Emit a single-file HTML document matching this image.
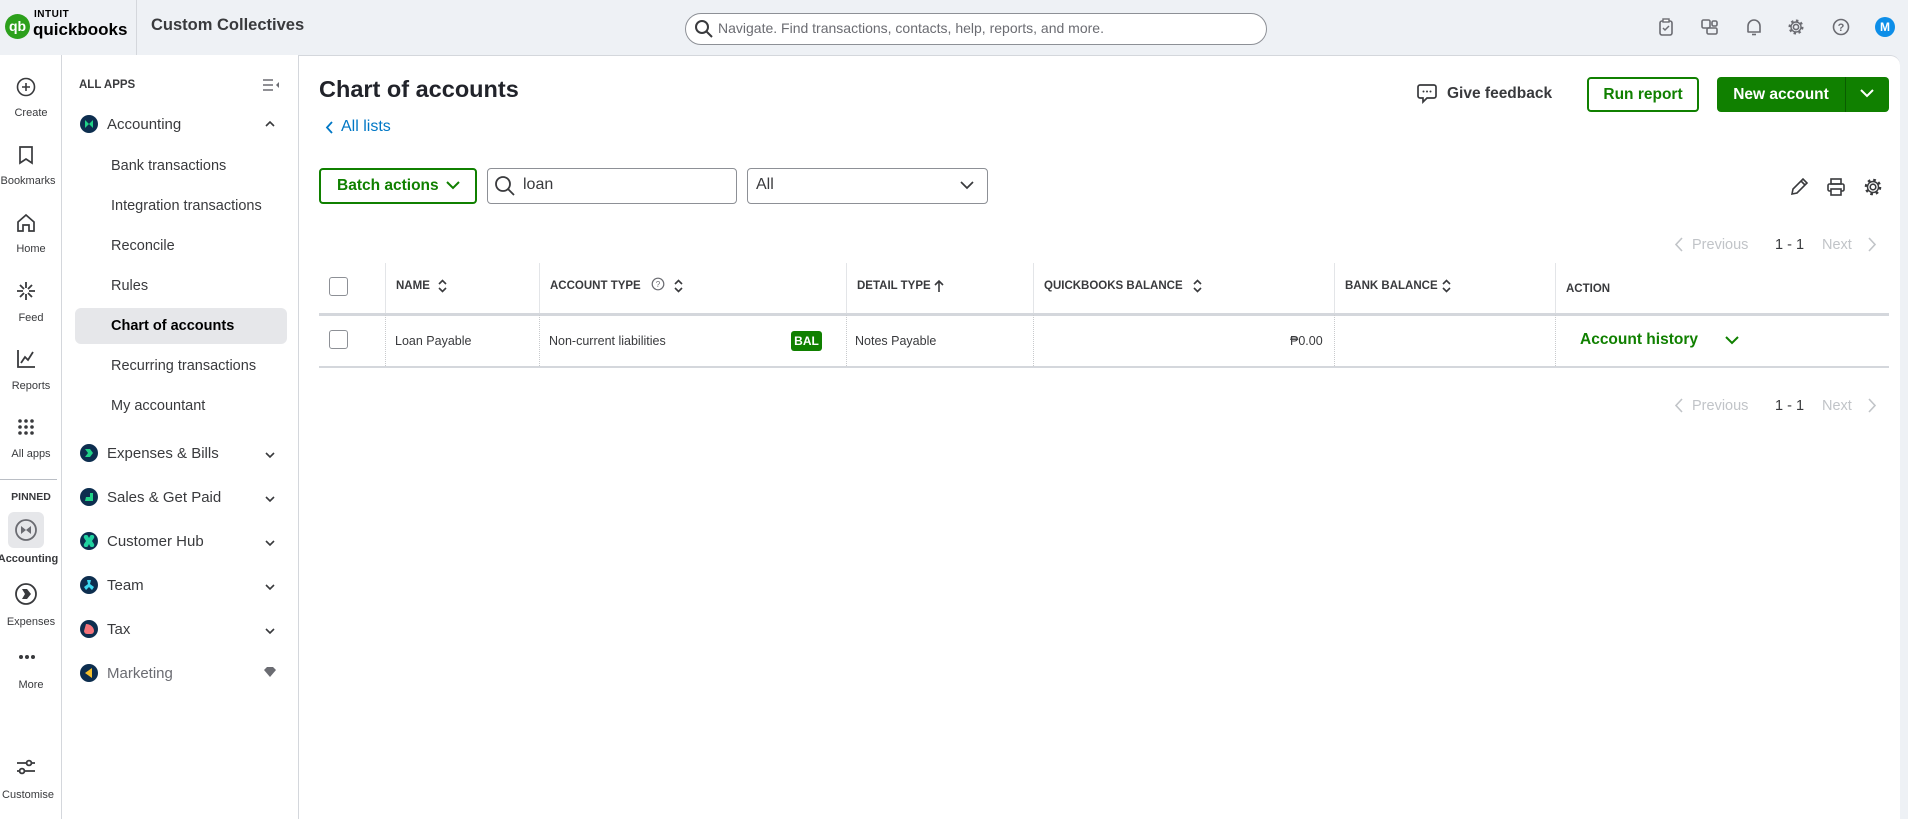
<!DOCTYPE html>
<html><head><meta charset="utf-8"><style>
*{box-sizing:border-box;margin:0;padding:0}
body{width:1908px;height:819px;overflow:hidden;background:#eef1f5;font-family:"Liberation Sans",Arial,sans-serif;color:#393a3d;position:relative}
.a{position:absolute;white-space:nowrap}
.panel{position:absolute;left:0;top:55px;width:1900px;height:764px;background:#fff;border-top-right-radius:10px;border-top:1px solid #d4d7dc}
.rail{position:absolute;left:0;top:55px;width:62px;height:764px;border-right:1.5px solid #d4d7dc;background:#fff}
.side{position:absolute;left:62px;top:55px;width:237px;height:764px;border-right:1.5px solid #d4d7dc;background:#fff}
.rl{font-size:11px;color:#393a3d;text-align:center;width:62px;left:0}
.si{font-size:15px;color:#393a3d}
.sub{left:111px;font-size:14.5px;color:#393a3d}
.ic{width:18px;height:18px;border-radius:50%;background:#0d2e4f;left:80px}
svg{position:absolute}
.th{font-size:11.5px;font-weight:bold;color:#393a3d;top:280px}
.vd{position:absolute;top:263px;width:0;height:51px;border-left:1px solid #e3e5e8}
.vd2{position:absolute;top:315px;height:51px;border-left:1px dotted #c8cacd}
.cb{position:absolute;width:19px;height:19px;border:1.5px solid #8d9096;border-radius:3px;left:329px}
.td{font-size:12.5px;color:#393a3d;top:334px}
.pg{font-size:14.5px;color:#c1c4c8}
</style></head><body>
<!-- header -->
<div class="a" style="left:5px;top:14px;width:25px;height:25px;border-radius:50%;background:#2ca01c;color:#fff;font-weight:bold;font-size:14px;text-align:center;line-height:25px">qb</div>
<div class="a" style="left:34px;top:9px;font-size:10px;font-weight:bold;color:#000;letter-spacing:.5px">INTUIT</div>
<div class="a" style="left:33px;top:20px;font-size:17px;font-weight:bold;color:#000">quickbooks</div>
<div class="a" style="left:136px;top:0;width:1px;height:55px;background:#d4d7dc"></div>
<div class="a" style="left:151px;top:16px;font-size:16.5px;font-weight:bold;color:#393a3d">Custom Collectives</div>
<div class="a" style="left:685px;top:13px;width:582px;height:32px;border:1px solid #8d9096;border-radius:16px;background:#fff"></div>
<svg style="left:694px;top:19px" width="20" height="20" viewBox="0 0 20 20"><circle cx="8" cy="8" r="6" fill="none" stroke="#393a3d" stroke-width="2"/><path d="M12.5 12.5L18 18" stroke="#393a3d" stroke-width="2"/></svg>
<div class="a" style="left:718px;top:20px;font-size:14px;color:#6b6c72">Navigate. Find transactions, contacts, help, reports, and more.</div>
<svg style="left:1657px;top:18px" width="18" height="18" viewBox="0 0 18 18"><rect x="3" y="3" width="12" height="14" rx="2" fill="none" stroke="#6b6c72" stroke-width="1.6"/><rect x="6" y="1" width="6" height="3" fill="#fff" stroke="#6b6c72" stroke-width="1.4"/><path d="M6 10l2 2 4-4" fill="none" stroke="#6b6c72" stroke-width="1.5"/></svg>
<svg style="left:1701px;top:18px" width="18" height="18" viewBox="0 0 18 18"><rect x="1" y="2" width="8" height="8" rx="1.5" fill="none" stroke="#6b6c72" stroke-width="1.6"/><rect x="11" y="3" width="5" height="5" rx="1.5" fill="none" stroke="#6b6c72" stroke-width="1.6"/><rect x="6" y="10" width="10" height="6" rx="1.5" fill="none" stroke="#6b6c72" stroke-width="1.6"/></svg>
<svg style="left:1745px;top:17px" width="18" height="20" viewBox="0 0 18 20"><path d="M3 15V9a6 6 0 0112 0v6H2.5h13" fill="none" stroke="#6b6c72" stroke-width="1.6"/><path d="M7 17.5h4" stroke="#6b6c72" stroke-width="1.6"/></svg>
<svg style="left:1787px;top:18px" width="18" height="18" viewBox="0 0 18 18"><circle cx="9" cy="9" r="2.6" fill="none" stroke="#6b6c72" stroke-width="1.6"/><circle cx="9" cy="9" r="6.3" fill="none" stroke="#6b6c72" stroke-width="2.4" stroke-dasharray="2.4 2.5"/><circle cx="9" cy="9" r="5" fill="none" stroke="#6b6c72" stroke-width="1.4"/></svg>
<svg style="left:1832px;top:18px" width="18" height="18" viewBox="0 0 18 18"><circle cx="9" cy="9" r="7.5" fill="none" stroke="#6b6c72" stroke-width="1.6"/><text x="9" y="13" text-anchor="middle" font-size="11" font-weight="bold" fill="#6b6c72" font-family="Liberation Sans">?</text></svg>
<div class="a" style="left:1875px;top:17px;width:20px;height:20px;border-radius:50%;background:#0d8ee8;color:#fff;font-size:12px;font-weight:bold;text-align:center;line-height:20px">M</div>

<div class="panel"></div>
<!-- rail -->
<div class="rail"></div>
<svg style="left:16px;top:77px" width="20" height="20" viewBox="0 0 20 20"><circle cx="10" cy="10" r="8.5" fill="none" stroke="#393a3d" stroke-width="1.6"/><path d="M10 6v8M6 10h8" stroke="#393a3d" stroke-width="1.6"/></svg>
<div class="a rl" style="top:107px">Create</div>
<svg style="left:18px;top:145px" width="16" height="20" viewBox="0 0 16 20"><path d="M2 2h12v16l-6-4-6 4z" fill="none" stroke="#393a3d" stroke-width="1.7"/></svg>
<div class="a rl" style="top:175px;left:-3px">Bookmarks</div>
<svg style="left:16px;top:213px" width="20" height="20" viewBox="0 0 20 20"><path d="M2 9L10 2l8 7v9h-5v-6H7v6H2z" fill="none" stroke="#393a3d" stroke-width="1.7"/></svg>
<div class="a rl" style="top:243px">Home</div>
<svg style="left:16px;top:281px" width="20" height="20" viewBox="0 0 20 20" stroke="#393a3d" stroke-width="1.8"><path d="M10 1v6M10 13v6M1 10h6M13 10h6M4 4l4 4M12 12l4 4M16 4l-4 4M8 12l-4 4"/></svg>
<div class="a rl" style="top:312px">Feed</div>
<svg style="left:16px;top:349px" width="20" height="20" viewBox="0 0 20 20"><path d="M2 1v17h17" fill="none" stroke="#393a3d" stroke-width="1.8"/><path d="M5 14l4-6 3 3 5-8" fill="none" stroke="#393a3d" stroke-width="1.8"/></svg>
<div class="a rl" style="top:380px">Reports</div>
<svg style="left:17px;top:418px" width="18" height="18" viewBox="0 0 18 18" fill="#393a3d"><circle cx="3" cy="3" r="1.8"/><circle cx="9" cy="3" r="1.8"/><circle cx="15" cy="3" r="1.8"/><circle cx="3" cy="9" r="1.8"/><circle cx="9" cy="9" r="1.8"/><circle cx="15" cy="9" r="1.8"/><circle cx="3" cy="15" r="1.8"/><circle cx="9" cy="15" r="1.8"/><circle cx="15" cy="15" r="1.8"/></svg>
<div class="a rl" style="top:448px">All apps</div>
<div class="a" style="left:0;top:479px;width:57px;height:1px;background:#babec5"></div>
<div class="a rl" style="top:491px;font-weight:bold;font-size:10.5px">PINNED</div>
<div class="a" style="left:8px;top:512px;width:36px;height:36px;border-radius:6px;background:#e6e7ea"></div>
<svg style="left:14px;top:518px" width="24" height="24" viewBox="0 0 24 24"><circle cx="12" cy="12" r="10" fill="none" stroke="#6b6c72" stroke-width="1.8"/><path d="M7 8l5 4-5 4zM17 8l-5 4 5 4z" fill="#6b6c72"/></svg>
<div class="a rl" style="top:553px;font-weight:bold;left:-3px">Accounting</div>
<svg style="left:14px;top:582px" width="24" height="24" viewBox="0 0 24 24"><circle cx="12" cy="12" r="10" fill="none" stroke="#393a3d" stroke-width="1.8"/><path d="M8 7h5l4 5-4 5H8l3-5z" fill="#393a3d"/></svg>
<div class="a rl" style="top:616px">Expenses</div>
<svg style="left:18px;top:654px" width="18" height="6" viewBox="0 0 18 6" fill="#393a3d"><circle cx="3" cy="3" r="2"/><circle cx="9" cy="3" r="2"/><circle cx="15" cy="3" r="2"/></svg>
<div class="a rl" style="top:679px">More</div>
<svg style="left:16px;top:759px" width="20" height="16" viewBox="0 0 20 16" stroke="#393a3d" stroke-width="1.8" fill="#fff"><path d="M1 4h18M1 12h18"/><circle cx="13" cy="4" r="2.4"/><circle cx="6" cy="12" r="2.4"/></svg>
<div class="a rl" style="top:789px;left:-3px">Customise</div>

<!-- sidebar -->
<div class="side"></div>
<div class="a" style="left:79px;top:79px;font-size:11.5px;font-weight:bold;color:#393a3d">ALL APPS</div>
<svg style="left:263px;top:79px" width="16" height="12" viewBox="0 0 16 12" stroke="#6b6c72" stroke-width="1.5"><path d="M0 1h10M0 6h10M0 11h10"/><path d="M16 3v6l-3-3z" fill="#6b6c72" stroke="none"/></svg>
<div class="a ic" style="top:115px"></div><svg style="left:83px;top:118px" width="12" height="12" viewBox="0 0 12 12"><path d="M2 2l4 4-4 4zM10 2L6 6l4 4z" fill="#20d287"/></svg>
<div class="a si" style="left:107px;top:116px">Accounting</div>
<svg style="left:265px;top:120px" width="10" height="7" viewBox="0 0 10 7"><path d="M1 6l4-4 4 4" fill="none" stroke="#393a3d" stroke-width="1.6"/></svg>
<div class="a sub" style="top:158px">Bank transactions</div>
<div class="a sub" style="top:198px">Integration transactions</div>
<div class="a sub" style="top:238px">Reconcile</div>
<div class="a sub" style="top:278px">Rules</div>
<div class="a" style="left:75px;top:308px;width:212px;height:36px;border-radius:6px;background:#e6e7ea"></div>
<div class="a sub" style="top:318px;font-weight:bold;color:#000">Chart of accounts</div>
<div class="a sub" style="top:358px">Recurring transactions</div>
<div class="a sub" style="top:398px">My accountant</div>
<div class="a ic" style="top:444px"></div><svg style="left:83px;top:447px" width="12" height="12" viewBox="0 0 12 12"><path d="M2 2h5l3 4-3 4H2l3-4z" fill="#20d287"/></svg>
<div class="a si" style="left:107px;top:445px">Expenses &amp; Bills</div>
<div class="a ic" style="top:488px"></div><svg style="left:83px;top:491px" width="12" height="12" viewBox="0 0 12 12"><path d="M2 10h8V2H7v4H3z" fill="#20d287"/></svg>
<div class="a si" style="left:107px;top:489px">Sales &amp; Get Paid</div>
<div class="a ic" style="top:532px"></div><svg style="left:83px;top:535px" width="12" height="12" viewBox="0 0 12 12"><path d="M1 3a2 2 0 014-2l1 2 1-2a2 2 0 014 2l-2 3 2 3a2 2 0 01-4 2L6 9l-1 2a2 2 0 01-4-2l2-3z" fill="#20d2a0"/></svg>
<div class="a si" style="left:107px;top:533px">Customer Hub</div>
<div class="a ic" style="top:576px"></div><svg style="left:83px;top:579px" width="12" height="12" viewBox="0 0 12 12"><path d="M4 1h4l-1 4 4 3-2 3-3-3-3 3-2-3 4-3z" fill="#3dd8f0"/></svg>
<div class="a si" style="left:107px;top:577px">Team</div>
<div class="a ic" style="top:620px"></div><svg style="left:83px;top:623px" width="12" height="12" viewBox="0 0 12 12"><path d="M3 1c4 0 8 3 8 7a3 3 0 01-3 3H4a3 3 0 01-3-3z" fill="#f4737a"/></svg>
<div class="a si" style="left:107px;top:621px">Tax</div>
<div class="a ic" style="top:664px"></div><svg style="left:83px;top:667px" width="12" height="12" viewBox="0 0 12 12"><path d="M2 6l7-5v10z" fill="#f5c02c"/></svg>
<div class="a si" style="left:107px;top:665px;color:#6b6c72">Marketing</div>
<svg style="left:265px;top:452px" width="10" height="7" viewBox="0 0 10 7"><path d="M1 1l4 4 4-4" fill="none" stroke="#393a3d" stroke-width="1.6"/></svg>
<svg style="left:265px;top:496px" width="10" height="7" viewBox="0 0 10 7"><path d="M1 1l4 4 4-4" fill="none" stroke="#393a3d" stroke-width="1.6"/></svg>
<svg style="left:265px;top:540px" width="10" height="7" viewBox="0 0 10 7"><path d="M1 1l4 4 4-4" fill="none" stroke="#393a3d" stroke-width="1.6"/></svg>
<svg style="left:265px;top:584px" width="10" height="7" viewBox="0 0 10 7"><path d="M1 1l4 4 4-4" fill="none" stroke="#393a3d" stroke-width="1.6"/></svg>
<svg style="left:265px;top:628px" width="10" height="7" viewBox="0 0 10 7"><path d="M1 1l4 4 4-4" fill="none" stroke="#393a3d" stroke-width="1.6"/></svg>
<svg style="left:264px;top:667px" width="12" height="10" viewBox="0 0 12 10"><path d="M3 0h6l3 3-6 7-6-7z" fill="#6b6c72"/></svg>

<!-- main -->
<div class="a" style="left:319px;top:76px;font-size:23.5px;font-weight:bold;color:#21232a">Chart of accounts</div>
<svg style="left:325px;top:121px" width="8" height="13" viewBox="0 0 8 13"><path d="M7 1L2 6.5 7 12" fill="none" stroke="#0077c5" stroke-width="1.8"/></svg>
<div class="a" style="left:341px;top:118px;font-size:16px;color:#0077c5">All lists</div>

<svg style="left:1417px;top:83px" width="20" height="22" viewBox="0 0 20 22"><path d="M3 2h14a2 2 0 012 2v9a2 2 0 01-2 2h-7l-4 4v-4H3a2 2 0 01-2-2V4a2 2 0 012-2z" fill="none" stroke="#393a3d" stroke-width="1.7"/><circle cx="6.5" cy="8.5" r="1" fill="#393a3d"/><circle cx="10" cy="8.5" r="1" fill="#393a3d"/><circle cx="13.5" cy="8.5" r="1" fill="#393a3d"/></svg>
<div class="a" style="left:1447px;top:85px;font-size:15.5px;font-weight:bold;color:#393a3d">Give feedback</div>
<div class="a" style="left:1587px;top:77px;width:112px;height:35px;border:2px solid #108000;border-radius:4px;color:#108000;font-size:15.5px;font-weight:bold;text-align:center;line-height:31px">Run report</div>
<div class="a" style="left:1717px;top:77px;width:172px;height:35px;background:#108000;border-radius:4px"></div>
<div class="a" style="left:1717px;top:77px;width:128px;height:35px;color:#fff;font-size:15.5px;font-weight:bold;text-align:center;line-height:35px">New account</div>
<div class="a" style="left:1845px;top:77px;width:1px;height:35px;background:#0a5c00"></div>
<svg style="left:1860px;top:89px" width="14" height="9" viewBox="0 0 14 9"><path d="M1 1l6 6 6-6" fill="none" stroke="#fff" stroke-width="2"/></svg>

<div class="a" style="left:319px;top:168px;width:158px;height:36px;border:2px solid #108000;border-radius:4px"></div>
<div class="a" style="left:337px;top:177px;font-size:15.5px;font-weight:bold;color:#108000">Batch actions</div>
<svg style="left:446px;top:181px" width="14" height="9" viewBox="0 0 14 9"><path d="M1 1l6 6 6-6" fill="none" stroke="#108000" stroke-width="2"/></svg>
<div class="a" style="left:487px;top:168px;width:250px;height:36px;border:1px solid #8d9096;border-radius:4px"></div>
<svg style="left:494px;top:175px" width="22" height="22" viewBox="0 0 22 22"><circle cx="9" cy="9" r="7" fill="none" stroke="#393a3d" stroke-width="1.8"/><path d="M14 14l6 6" stroke="#393a3d" stroke-width="1.8"/></svg>
<div class="a" style="left:523px;top:176px;font-size:16px;color:#393a3d">loan</div>
<div class="a" style="left:747px;top:168px;width:241px;height:36px;border:1px solid #8d9096;border-radius:4px"></div>
<div class="a" style="left:756px;top:176px;font-size:16px;color:#393a3d">All</div>
<svg style="left:960px;top:181px" width="14" height="9" viewBox="0 0 14 9"><path d="M1 1l6 6 6-6" fill="none" stroke="#393a3d" stroke-width="1.7"/></svg>

<svg style="left:1789px;top:177px" width="20" height="20" viewBox="0 0 20 20"><path d="M3 17l1-5L14 2l4 4L8 16zM12 4l4 4" fill="none" stroke="#393a3d" stroke-width="1.6"/></svg>
<svg style="left:1826px;top:177px" width="20" height="20" viewBox="0 0 20 20"><rect x="5" y="2" width="10" height="5" fill="none" stroke="#393a3d" stroke-width="1.6"/><rect x="2" y="7" width="16" height="7" rx="1.5" fill="none" stroke="#393a3d" stroke-width="1.6"/><rect x="5" y="12" width="10" height="6" fill="#fff" stroke="#393a3d" stroke-width="1.6"/></svg>
<svg style="left:1863px;top:177px" width="20" height="20" viewBox="0 0 20 20"><circle cx="10" cy="10" r="2.8" fill="none" stroke="#393a3d" stroke-width="1.6"/><circle cx="10" cy="10" r="7" fill="none" stroke="#393a3d" stroke-width="2.6" stroke-dasharray="2.6 2.9"/><circle cx="10" cy="10" r="5.5" fill="none" stroke="#393a3d" stroke-width="1.4"/></svg>

<svg style="left:1674px;top:237px" width="9" height="15" viewBox="0 0 9 15"><path d="M8 1L2 7.5 8 14" fill="none" stroke="#c1c4c8" stroke-width="1.6"/></svg>
<div class="a pg" style="left:1692px;top:237px">Previous</div>
<div class="a" style="left:1775px;top:237px;font-size:14.5px;color:#393a3d">1 - 1</div>
<div class="a pg" style="left:1822px;top:237px">Next</div>
<svg style="left:1868px;top:237px" width="9" height="15" viewBox="0 0 9 15"><path d="M1 1l6 6.5L1 14" fill="none" stroke="#c1c4c8" stroke-width="1.6"/></svg>

<!-- table -->
<div class="cb" style="top:277px"></div>
<div class="vd" style="left:385px"></div><div class="vd" style="left:539px"></div><div class="vd" style="left:846px"></div><div class="vd" style="left:1033px"></div><div class="vd" style="left:1334px"></div><div class="vd" style="left:1555px"></div>
<div class="a th" style="left:396px">NAME</div>
<div class="a th" style="left:550px">ACCOUNT TYPE</div>
<div class="a th" style="left:857px">DETAIL TYPE</div>
<div class="a th" style="left:1044px">QUICKBOOKS BALANCE</div>
<div class="a th" style="left:1345px">BANK BALANCE</div>
<div class="a th" style="left:1566px;top:283px">ACTION</div>
<svg style="left:651px;top:277px" width="14" height="14" viewBox="0 0 14 14"><circle cx="7" cy="7" r="5.8" fill="none" stroke="#6b6c72" stroke-width="1.2"/><text x="7" y="10" text-anchor="middle" font-size="8" fill="#6b6c72" font-family="Liberation Sans">?</text></svg>
<svg style="left:438px;top:279px" width="9" height="14" viewBox="0 0 9 14" fill="none" stroke="#393a3d" stroke-width="1.6"><path d="M1 5l3.5-3.5L8 5M1 9l3.5 3.5L8 9"/></svg>
<svg style="left:674px;top:279px" width="9" height="14" viewBox="0 0 9 14" fill="none" stroke="#393a3d" stroke-width="1.6"><path d="M1 5l3.5-3.5L8 5M1 9l3.5 3.5L8 9"/></svg>
<svg style="left:1193px;top:279px" width="9" height="14" viewBox="0 0 9 14" fill="none" stroke="#393a3d" stroke-width="1.6"><path d="M1 5l3.5-3.5L8 5M1 9l3.5 3.5L8 9"/></svg>
<svg style="left:1442px;top:279px" width="9" height="14" viewBox="0 0 9 14" fill="none" stroke="#393a3d" stroke-width="1.6"><path d="M1 5l3.5-3.5L8 5M1 9l3.5 3.5L8 9"/></svg>
<svg style="left:934px;top:279px" width="10" height="14" viewBox="0 0 10 14" fill="none" stroke="#393a3d" stroke-width="1.6"><path d="M5 13V2M1 6l4-4 4 4"/></svg>
<div class="a" style="left:319px;top:313px;width:1570px;height:3px;background:#d4d7dc"></div>
<div class="cb" style="top:330px"></div>
<div class="vd2" style="left:385px"></div><div class="vd2" style="left:539px"></div><div class="vd2" style="left:846px"></div><div class="vd2" style="left:1033px"></div><div class="vd2" style="left:1334px"></div><div class="vd2" style="left:1555px"></div>
<div class="a td" style="left:395px">Loan Payable</div>
<div class="a td" style="left:549px">Non-current liabilities</div>
<div class="a" style="left:791px;top:331px;width:31px;height:20px;background:#108000;border-radius:3px;color:#fff;font-size:12px;font-weight:bold;text-align:center;line-height:20px">BAL</div>
<div class="a td" style="left:855px">Notes Payable</div>
<div class="a td" style="left:1290px">₱0.00</div>
<div class="a" style="left:1580px;top:331px;font-size:15.5px;font-weight:bold;color:#108000">Account history</div>
<svg style="left:1725px;top:336px" width="14" height="9" viewBox="0 0 14 9"><path d="M1 1l6 6 6-6" fill="none" stroke="#108000" stroke-width="2"/></svg>
<div class="a" style="left:319px;top:366px;width:1570px;height:1.5px;background:#d4d7dc"></div>

<svg style="left:1674px;top:398px" width="9" height="15" viewBox="0 0 9 15"><path d="M8 1L2 7.5 8 14" fill="none" stroke="#c1c4c8" stroke-width="1.6"/></svg>
<div class="a pg" style="left:1692px;top:398px">Previous</div>
<div class="a" style="left:1775px;top:398px;font-size:14.5px;color:#393a3d">1 - 1</div>
<div class="a pg" style="left:1822px;top:398px">Next</div>
<svg style="left:1868px;top:398px" width="9" height="15" viewBox="0 0 9 15"><path d="M1 1l6 6.5L1 14" fill="none" stroke="#c1c4c8" stroke-width="1.6"/></svg>
</body></html>
